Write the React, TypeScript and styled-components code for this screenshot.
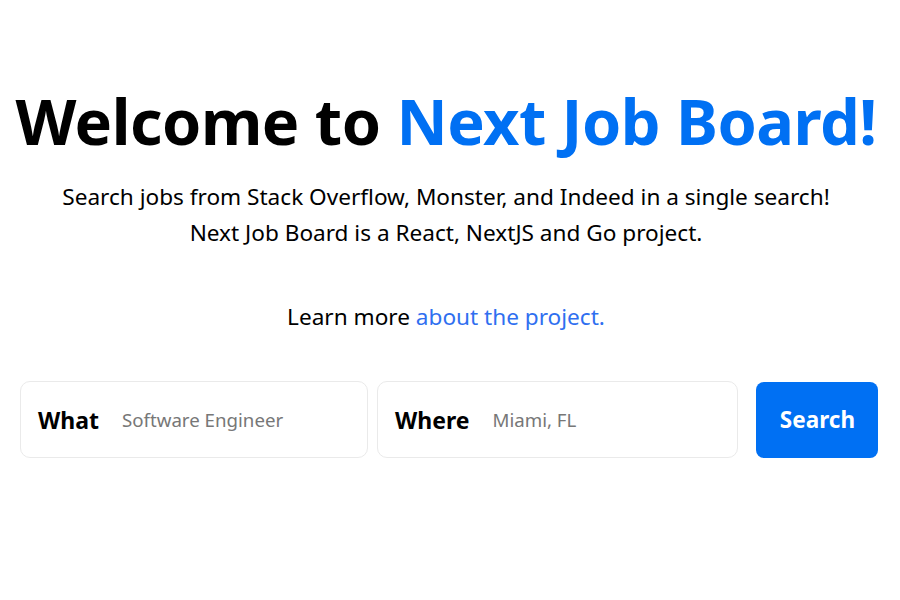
import React from "react";
import styled, { createGlobalStyle } from "styled-components";

const Global = createGlobalStyle`
  html, body { margin: 0; padding: 0; background: #fff; }
  body { font-family: "Noto Sans", "Open Sans", sans-serif; color: #000; }
  * { box-sizing: border-box; }
`;

const Main = styled.main`
  width: 892px;
  display: flex;
  flex-direction: column;
  align-items: center;
  padding-top: 85px;
`;

const Title = styled.h1`
  margin: 0;
  font-size: 63px;
  line-height: 72px;
  font-weight: 700;
  letter-spacing: -0.5px;
  text-align: center;
  white-space: nowrap;
`;

const Accent = styled.span`
  color: #0070f3;
`;

const Description = styled.p`
  margin: 22px 0 0;
  font-size: 22.6px;
  line-height: 36px;
  text-align: center;
`;

const Learn = styled.p`
  margin: 48px 0 0;
  font-size: 22.6px;
  line-height: 36px;
  text-align: center;
`;

const Link = styled.a`
  color: #2f6ff0;
  text-decoration: none;
`;

const SearchRow = styled.form`
  margin-top: 46px;
  display: flex;
  align-items: center;
  width: 858px;
  margin-left: 6px;
`;

const Field = styled.label<{ $gap: number }>`
  display: flex;
  align-items: center;
  flex-shrink: 0;
  height: 77px;
  padding: 0 16px 0 17px;
  border: 1px solid #eaeaea;
  border-radius: 10px;
  margin-right: ${(p) => p.$gap}px;
`;

const FieldLabel = styled.span`
  font-size: 23px;
  font-weight: 700;
  margin-right: 23px;
`;

const Input = styled.input`
  width: 229px;
  border: none;
  outline: none;
  font-family: inherit;
  font-size: 18.7px;
  color: #000;
  padding: 0;
  &::placeholder { color: #777; }
`;

const Button = styled.button`
  flex-shrink: 0;
  width: 122px;
  height: 76px;
  border: none;
  border-radius: 8px;
  background: #0070f3;
  color: #fff;
  font-family: inherit;
  font-size: 22.5px;
  font-weight: 700;
`;

export default function App() {
  return (
    <>
      <Global />
      <Main>
        <Title>
          Welcome to <Accent>Next Job Board!</Accent>
        </Title>
        <Description>
          Search jobs from Stack Overflow, Monster, and Indeed in a single search!
          <br />
          Next Job Board is a React, NextJS and Go project.
        </Description>
        <Learn>
          Learn more <Link href="#">about the project.</Link>
        </Learn>
        <SearchRow onSubmit={(e) => e.preventDefault()}>
          <Field $gap={9}>
            <FieldLabel>What</FieldLabel>
            <Input placeholder="Software Engineer" />
          </Field>
          <Field $gap={18}>
            <FieldLabel>Where</FieldLabel>
            <Input placeholder="Miami, FL" />
          </Field>
          <Button type="submit">Search</Button>
        </SearchRow>
      </Main>
    </>
  );
}
